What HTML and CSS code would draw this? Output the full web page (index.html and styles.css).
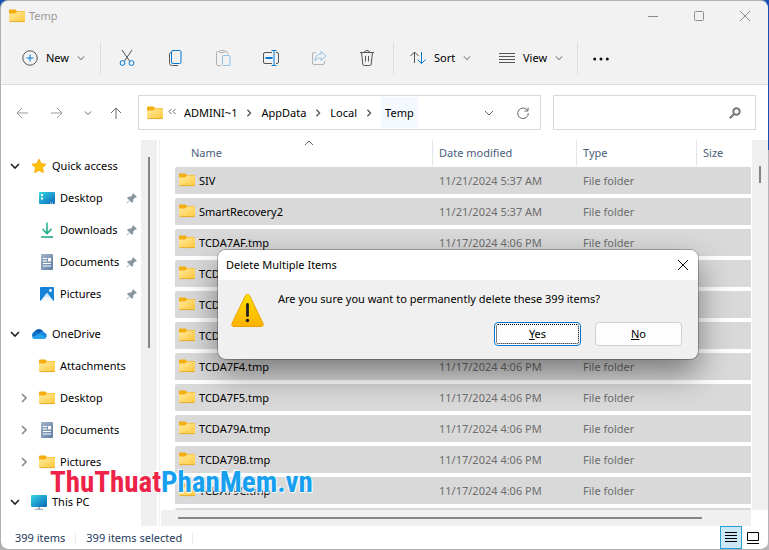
FILE: index.html
```
<!DOCTYPE html>
<html lang="en">

<head>
    <meta charset="UTF-8">
    <meta name="viewport" content="width=device-width, initial-scale=1.0">
    <title>Temp</title>
    <link rel="stylesheet" href="styles.css">
</head>

<body>
    <!-- Shared icons -->
    <svg class="sprite" aria-hidden="true">
        <defs>
            <linearGradient id="gFolder" x1="0" y1="0" x2="1" y2="1">
                <stop offset="0" stop-color="#ffe9a0" />
                <stop offset="1" stop-color="#ffca3c" />
            </linearGradient>
            <linearGradient id="gScreen" x1="0" y1="0" x2="1" y2="1">
                <stop offset="0" stop-color="#35d6e4" />
                <stop offset="1" stop-color="#0b66b8" />
            </linearGradient>
            <linearGradient id="gDown" gradientUnits="userSpaceOnUse" x1="0" y1="0" x2="16" y2="16">
                <stop offset="0" stop-color="#2fd09a" />
                <stop offset="1" stop-color="#0f9183" />
            </linearGradient>
            <linearGradient id="gDoc" x1="0" y1="0" x2="1" y2="1">
                <stop offset="0" stop-color="#a3b6cc" />
                <stop offset="1" stop-color="#5f7da1" />
            </linearGradient>
            <linearGradient id="gWarn" x1="0" y1="0" x2="0" y2="1">
                <stop offset="0" stop-color="#ffe000" />
                <stop offset="1" stop-color="#ffb100" />
            </linearGradient>
        </defs>
        <symbol id="folder" viewBox="0 0 16 16">
            <path d="M0 2.500a1 1 0 0 1 1-1h5.500l1.500 1.500h7a1 1 0 0 1 1 1V6H0z" fill="#f4ae0d" />
            <path d="M0 5.500h6l2-2h7a1 1 0 0 1 1 1V13a1 1 0 0 1-1 1H1a1 1 0 0 1-1-1z" fill="url(#gFolder)" />
            <path d="M.5 13.600h15" stroke="#e0a022" stroke-width=".8" />
        </symbol>
        <symbol id="desktop" viewBox="0 0 16 16">
            <rect y="2" width="16" height="12" rx="1" fill="url(#gScreen)" />
            <path d="M2 4h2v2H2zM2 7.500h2v2H2z" fill="#fff" />
            <path d="M11 13h1M13 13h1" stroke="#fff" />
        </symbol>
        <symbol id="download" viewBox="0 0 16 16">
            <path d="M8 .5V11M3.500 7L8 11.500 12.500 7M2 15h12" fill="none" stroke="url(#gDown)" stroke-width="1.600" />
        </symbol>
        <symbol id="document" viewBox="0 0 16 16">
            <rect x="2" width="12" height="16" rx="1" fill="url(#gDoc)" />
            <path d="M4 4.500h4M4 7h4M4 9.500h8M4 12h8" stroke="#fff" stroke-width="1.200" />
            <path d="M9 4h3v3.500H9z" fill="#fff" />
        </symbol>
        <symbol id="picture" viewBox="0 0 16 16">
            <rect x="1" y="1" width="14" height="14" rx="1" fill="#1583d8" />
            <path d="M1.500 15l6.500-8 6.500 8z" fill="#f5faff" />
            <path d="M5 10.500L8 7l3 3.500-1.500 1L8 10.500l-1.500 1z" fill="#d3e8f8" />
            <circle cx="11.500" cy="4.500" r="1.400" fill="#fff" />
        </symbol>
        <symbol id="star" viewBox="0 0 16 16">
            <path d="M8 1.200l2.100 4.500 4.900.6-3.600 3.400.9 4.900L8 12.200l-4.300 2.400.9-4.900L1 6.300l4.900-.6z" fill="#ffc20e" stroke="#f9a800" stroke-linejoin="round" />
        </symbol>
        <symbol id="cloud" viewBox="0 0 16 16">
            <path d="M4 12.500a4 4 0 0 1-.5-7A5 5 0 0 1 12.500 6L9 10z" fill="#0a5cb5" />
            <path d="M4 12.800a3.700 3.700 0 0 1-1.500-6.600c2-.8 4-.2 5.500 1L12 9z" fill="#1171cc" />
            <path d="M8 7.500C9 5.800 11 5.200 13 6.200a3.400 3.400 0 0 1 1 6.300z" fill="#1c8ae0" />
            <path d="M4 13c-1.500 0-2.500-.6-3-1.500L8 7.800l7 3.700c-.5 1-1.400 1.500-2.500 1.500z" fill="#28a4ec" />
        </symbol>
        <symbol id="computer" viewBox="0 0 16 16">
            <rect y="1" width="16" height="12" rx="1" fill="url(#gScreen)" />
            <path d="M7 13h2v2H7z" fill="#a8b2ba" />
            <path d="M4 15.300h8" stroke="#8e9aa4" />
        </symbol>
        <symbol id="pin" viewBox="0 0 12 12">
            <path d="M7 1l4 4-1.200.6-1 .2-1.600 1.800v2L6 11 3.800 8.600 1 11.400l-.4-.4 2.800-2.800L1 6l1.400-1.200h2L6.200 3.200l.2-1z" fill="#8795a0" />
        </symbol>
        <symbol id="chevDown" viewBox="0 0 10 10">
            <path d="M1 3l4 4 4-4" fill="none" stroke="currentColor" stroke-width="1.600" />
        </symbol>
        <symbol id="chevRight" viewBox="0 0 10 10">
            <path d="M3 1l4 4-4 4" fill="none" stroke="currentColor" stroke-width="1.600" />
        </symbol>
    </svg>

    <div class="window">
        <header class="titlebar">
            <svg class="icon"><use href="#folder" /></svg>
            <h1>Temp</h1>
            <button class="caption" aria-label="Minimize"><svg width="10" height="10"><path d="M0 5.500h10" /></svg></button>
            <button class="caption" aria-label="Maximize"><svg width="10" height="10"><rect x=".5" y=".5" width="9" height="9" rx="1" /></svg></button>
            <button class="caption" aria-label="Close"><svg width="10" height="10"><path d="M0 0l10 10M10 0L0 10" /></svg></button>
        </header>

        <div class="toolbar">
            <button class="command new">
                <svg width="16" height="16" viewBox="0 0 16 16"><circle cx="8" cy="8" r="7.200" /><path class="blue" d="M8 4.500v7M4.500 8h7" /></svg>
                New
                <svg class="chev"><use href="#chevDown" /></svg>
            </button>
            <span class="divider"></span>
            <button class="tool" aria-label="Cut">
                <svg width="16" height="16" viewBox="0 0 16 16"><path d="M3 0l7.500 11M13 0L5.500 11" /><circle class="blue" cx="3.500" cy="13" r="2.400" /><circle class="blue" cx="12.500" cy="13" r="2.400" /></svg>
            </button>
            <button class="tool" aria-label="Copy">
                <svg width="16" height="16" viewBox="0 0 16 16"><path d="M4 2.500C2.500 3 2.500 3.500 2.500 5v7.500c0 2 1 3 3 3H11" /><rect class="blue" x="4.500" y=".5" width="9.500" height="13" rx="1.500" /></svg>
            </button>
            <button class="tool faded" aria-label="Paste">
                <svg width="16" height="16" viewBox="0 0 16 16"><path d="M6 15.500H2.500a1 1 0 0 1-1-1v-12a1 1 0 0 1 1-1H5M10 1.500h1.500a1 1 0 0 1 1 1V4" /><rect x="4.500" y=".5" width="6" height="2" rx="1" /><rect class="blue" x="7.500" y="5.500" width="7.500" height="10" rx="1" /></svg>
            </button>
            <button class="tool" aria-label="Rename">
                <svg width="16" height="16" viewBox="0 0 16 16"><path d="M9 2.500H2a1.500 1.500 0 0 0-1.500 1.500v8A1.500 1.500 0 0 0 2 13.500h7M13 2.500h1a1.500 1.500 0 0 1 1.500 1.500v8a1.500 1.500 0 0 1-1.500 1.500h-1" /><path class="blue" d="M8.500.5h5M8.500 15.500h5M11 .5v15" /><path class="blue thick" d="M2.500 8h7" /></svg>
            </button>
            <button class="tool faded" aria-label="Share">
                <svg width="16" height="16" viewBox="0 0 16 16"><path d="M5 2.500H3A1.500 1.500 0 0 0 1.500 4v9A1.500 1.500 0 0 0 3 14.500h9a1.500 1.500 0 0 0 1.500-1.500v-2" /><path class="blue" d="M10 1.500l5 4.500-5 4.500V8c-3-.2-4.500.8-6 3 0-4 2-7 6-7z" /></svg>
            </button>
            <button class="tool" aria-label="Delete">
                <svg width="16" height="16" viewBox="0 0 16 16"><path d="M1 2.500h14M5.500 2.500a2.500 2 0 0 1 5 0M2.500 2.500l1.300 11.500a1.500 1.500 0 0 0 1.500 1.500h5.400a1.500 1.500 0 0 0 1.500-1.500l1.300-11.500M6.500 6v5.500M9.500 6v5.500" /></svg>
            </button>
            <span class="divider"></span>
            <button class="command sort">
                <svg width="16" height="16" viewBox="0 0 16 16"><path d="M4.500 13V2M.5 6l4-4 4 4" /><path class="blue" d="M11.500 2v11.500M7.500 9.500l4 4 4-4" /></svg>
                Sort
                <svg class="chev"><use href="#chevDown" /></svg>
            </button>
            <button class="command view">
                <svg width="16" height="16" viewBox="0 0 16 16"><path d="M0 3.500h16M0 6.500h16M0 9.500h16M0 12.500h16" /></svg>
                View
                <svg class="chev"><use href="#chevDown" /></svg>
            </button>
            <span class="divider"></span>
            <button class="tool more" aria-label="See more">
                <svg width="16" height="16" viewBox="0 0 16 16"><g class="dots"><circle cx="1.700" cy="9" r="1.500" /><circle cx="8" cy="9" r="1.500" /><circle cx="14.300" cy="9" r="1.500" /></g></svg>
            </button>
        </div>

        <nav class="address-row">
            <button class="nav-btn off" aria-label="Back"><svg width="12" height="12"><path d="M6 1L1 6l5 5M1 6h11" /></svg></button>
            <button class="nav-btn off" aria-label="Forward"><svg width="12" height="12"><path d="M6 1l5 5-5 5M11 6H0" /></svg></button>
            <button class="nav-btn recent" aria-label="Recent locations"><svg width="8" height="8"><path d="M1 2.500l3 3 3-3" /></svg></button>
            <button class="nav-btn up" aria-label="Up"><svg width="12" height="12"><path d="M1 6l5-5 5 5M6 1v11" /></svg></button>
            <div class="address">
                <svg class="icon"><use href="#folder" /></svg>
                <svg class="back" width="8" height="8"><path d="M3.500 1L1 3.500 3.500 6M7.500 1L5 3.500 7.500 6" /></svg>
                <a href="#">ADMINI~1</a>
                <svg class="sep"><use href="#chevRight" /></svg>
                <a href="#">AppData</a>
                <svg class="sep"><use href="#chevRight" /></svg>
                <a href="#">Local</a>
                <svg class="sep"><use href="#chevRight" /></svg>
                <a href="#" class="current">Temp</a>
                <button class="history" aria-label="Previous locations"><svg width="10" height="10"><path d="M1 3l4 4 4-4" /></svg></button>
                <button aria-label="Refresh"><svg width="12" height="12"><path d="M10.500 3.500A5.300 5.300 0 1 0 11.300 6M11 .5v3.500H7.500" /></svg></button>
            </div>
            <label class="search">
                <input type="text" aria-label="Search Temp">
                <svg width="12" height="12"><circle cx="7.500" cy="4.500" r="3.200" /><path d="M5 7L.8 11.200" /></svg>
            </label>
        </nav>

        <main>
            <aside class="sidebar">
                <ul class="tree">
                    <li class="root"><svg class="chev"><use href="#chevDown" /></svg><svg class="icon"><use href="#star" /></svg><a href="#">Quick access</a></li>
                    <li><svg class="icon"><use href="#desktop" /></svg><a href="#">Desktop</a><svg class="pin"><use href="#pin" /></svg></li>
                    <li><svg class="icon"><use href="#download" /></svg><a href="#">Downloads</a><svg class="pin"><use href="#pin" /></svg></li>
                    <li><svg class="icon"><use href="#document" /></svg><a href="#">Documents</a><svg class="pin"><use href="#pin" /></svg></li>
                    <li><svg class="icon"><use href="#picture" /></svg><a href="#">Pictures</a><svg class="pin"><use href="#pin" /></svg></li>
                </ul>
                <ul class="tree">
                    <li class="root"><svg class="chev"><use href="#chevDown" /></svg><svg class="icon"><use href="#cloud" /></svg><a href="#">OneDrive</a></li>
                    <li><svg class="icon"><use href="#folder" /></svg><a href="#">Attachments</a></li>
                    <li class="closed"><svg class="chev"><use href="#chevRight" /></svg><svg class="icon"><use href="#folder" /></svg><a href="#">Desktop</a></li>
                    <li class="closed"><svg class="chev"><use href="#chevRight" /></svg><svg class="icon"><use href="#document" /></svg><a href="#">Documents</a></li>
                    <li class="closed"><svg class="chev"><use href="#chevRight" /></svg><svg class="icon"><use href="#folder" /></svg><a href="#">Pictures</a></li>
                </ul>
                <ul class="tree">
                    <li class="root"><svg class="chev"><use href="#chevDown" /></svg><svg class="icon"><use href="#computer" /></svg><a href="#">This PC</a></li>
                </ul>
            </aside>
            <div class="scroll side-scroll"><span></span></div>

            <section class="files">
                <div class="list">
                    <table>
                        <thead>
                            <tr>
                                <th class="name">Name<svg class="sorted" width="10" height="6"><path d="M1 5l4-4 4 4" /></svg></th>
                                <th class="date">Date modified</th>
                                <th class="type">Type</th>
                                <th class="size">Size</th>
                            </tr>
                        </thead>
                        <tbody>
                            <tr><td><svg class="icon"><use href="#folder" /></svg>SIV</td><td>11/21/2024 5:37 AM</td><td>File folder</td><td></td></tr>
                            <tr><td><svg class="icon"><use href="#folder" /></svg>SmartRecovery2</td><td>11/21/2024 5:37 AM</td><td>File folder</td><td></td></tr>
                            <tr><td><svg class="icon"><use href="#folder" /></svg>TCDA7AF.tmp</td><td>11/17/2024 4:06 PM</td><td>File folder</td><td></td></tr>
                            <tr><td><svg class="icon"><use href="#folder" /></svg>TCDA7B0.tmp</td><td>11/17/2024 4:06 PM</td><td>File folder</td><td></td></tr>
                            <tr><td><svg class="icon"><use href="#folder" /></svg>TCDA7C1.tmp</td><td>11/17/2024 4:06 PM</td><td>File folder</td><td></td></tr>
                            <tr><td><svg class="icon"><use href="#folder" /></svg>TCDA7E3.tmp</td><td>11/17/2024 4:06 PM</td><td>File folder</td><td></td></tr>
                            <tr><td><svg class="icon"><use href="#folder" /></svg>TCDA7F4.tmp</td><td>11/17/2024 4:06 PM</td><td>File folder</td><td></td></tr>
                            <tr><td><svg class="icon"><use href="#folder" /></svg>TCDA7F5.tmp</td><td>11/17/2024 4:06 PM</td><td>File folder</td><td></td></tr>
                            <tr><td><svg class="icon"><use href="#folder" /></svg>TCDA79A.tmp</td><td>11/17/2024 4:06 PM</td><td>File folder</td><td></td></tr>
                            <tr><td><svg class="icon"><use href="#folder" /></svg>TCDA79B.tmp</td><td>11/17/2024 4:06 PM</td><td>File folder</td><td></td></tr>
                            <tr><td><svg class="icon"><use href="#folder" /></svg>TCDA79C.tmp</td><td>11/17/2024 4:06 PM</td><td>File folder</td><td></td></tr>
                            <tr><td></td><td></td><td></td><td></td></tr>
                        </tbody>
                    </table>
                </div>
                <div class="scroll list-scroll"><span></span></div>
                <div class="bottom-scroll"><span></span></div>
            </section>
        </main>

        <footer class="status">
            <span>399 items</span>
            <span>399 items selected</span>
            <button class="layout active" aria-label="Details view"><svg width="12" height="11"><path d="M0 .5h12M0 3.500h12M0 6.500h12M0 9.500h12" /></svg></button>
            <button class="layout" aria-label="Large icons view"><svg width="12" height="12"><path d="M.5.5h11v8H.5zM0 11.500h12" /></svg></button>
        </footer>
    </div>

    <div class="dialog" role="dialog" aria-labelledby="dialogTitle">
        <div class="dialog-title">
            <h2 id="dialogTitle">Delete Multiple Items</h2>
            <button aria-label="Close"><svg width="10" height="10"><path d="M0 0l10 10M10 0L0 10" /></svg></button>
        </div>
        <div class="dialog-body">
            <svg class="warning" viewBox="0 0 33 33">
                <path d="M14.500 1.500a2.200 2.200 0 0 1 4 0L32 29.500a2 2 0 0 1-1.800 3H2.800a2 2 0 0 1-1.800-3z" fill="url(#gWarn)" stroke="#e8a200" />
                <path d="M16.500 10.500v11" stroke="#222" stroke-width="2.800" stroke-linecap="round" />
                <circle cx="16.500" cy="26.500" r="1.800" fill="#222" />
            </svg>
            <p>Are you sure you want to permanently delete these 399 items?</p>
        </div>
        <div class="dialog-buttons">
            <button class="yes"><u>Y</u>es</button>
            <button><u>N</u>o</button>
        </div>
    </div>

    <div class="watermark"><span>ThuThuat</span>PhanMem.vn</div>
</body>

</html>
```
FILE: styles.css
```
* {
    box-sizing: border-box;
}

body {
    font-family: "Noto Sans", "Open Sans", sans-serif;
    font-size: 11px;
    line-height: 16px;
    margin: 0;
    height: 100vh;
    overflow: hidden;
    color: #000;
    background: linear-gradient(to bottom, #1550b5 150px, #b4b4b8 150px);
}

button {
    font: inherit;
    color: inherit;
    background: none;
    border: none;
    padding: 0;
    display: flex;
    align-items: center;
    justify-content: center;
}

a {
    color: inherit;
    text-decoration: none;
}

svg {
    display: block;
    flex: none;
    fill: none;
    stroke: none;
}

.sprite {
    position: absolute;
    width: 0;
    height: 0;
}

.icon {
    width: 16px;
    height: 16px;
}

.window {
    height: 100%;
    display: flex;
    flex-direction: column;
    background: #fff;
    background-clip: padding-box;
    border: 1px solid #b0b0b0;
    border-right-color: transparent;
    border-radius: 8px;
    overflow: hidden;
}

/* Title bar */
.titlebar {
    display: flex;
    align-items: center;
    flex: none;
    height: 30px;
    padding-left: 8px;
    background: #f2f2f2;
}

.titlebar h1 {
    flex: 1;
    margin: 0 0 0 4px;
    font-size: 11px;
    font-weight: normal;
    color: #999;
}

.caption {
    width: 46px;
    height: 30px;
}

.caption svg {
    stroke: #8c8c8c;
}

/* Command bar */
.toolbar {
    display: flex;
    align-items: center;
    flex: none;
    height: 54px;
    padding-left: 12px;
    background: #f2f2f2;
    border-bottom: 1px solid #dcdcdc;
}

.toolbar svg {
    stroke: #555;
}

.toolbar .blue {
    stroke: #0078d4;
}

.toolbar .thick {
    stroke-width: 2;
}

.toolbar .dots {
    fill: #111;
    stroke: none;
}

.toolbar .faded {
    opacity: 0.4;
}

.divider {
    width: 1px;
    height: 32px;
    margin: 0 2px;
    background: #dedede;
}

.tool {
    width: 48px;
    height: 40px;
}

.tool.more {
    width: 42px;
}

.command {
    justify-content: flex-start;
    gap: 8px;
    height: 40px;
    padding-left: 9px;
    width: 85px;
}

.command.sort {
    width: 94px;
    padding-left: 14px;
}

.toolbar .chev {
    width: 8px;
    height: 8px;
    color: #999;
    stroke: none;
}

/* Navigation and address */
.address-row {
    display: flex;
    align-items: center;
    flex: none;
    height: 55px;
    padding: 0 12px 0 3px;
}

.nav-btn {
    width: 35px;
    height: 30px;
}

.nav-btn svg,
.address svg.back,
.address button svg,
.sorted {
    stroke: #666;
}

.nav-btn.off svg {
    stroke: #999;
}

.nav-btn.recent {
    width: 27px;
}

.nav-btn.up {
    width: 30px;
    margin-right: 7px;
}

.address {
    display: flex;
    align-items: center;
    flex: 2;
    height: 35px;
    border: 1px solid #d9d9d9;
}

.address .icon {
    margin-left: 8px;
}

.address .back {
    margin: 0 8px 2px 5px;
    stroke: #333;
}

.address .sep {
    width: 8px;
    height: 8px;
    margin: 0 8px;
    color: #555;
}

.address .current {
    line-height: 31px;
    padding: 0 4px;
    background: #f3f9fe;
}

.address button {
    width: 34px;
    height: 32px;
}

.address .history {
    margin-left: auto;
}

.search {
    display: flex;
    align-items: center;
    flex: 1;
    height: 35px;
    margin-left: 12px;
    border: 1px solid #d9d9d9;
}

.search input {
    flex: 1;
    min-width: 0;
    border: none;
    outline: none;
    font: inherit;
}

.search svg {
    margin-right: 14px;
    stroke: #777;
    stroke-width: 2;
}

/* Folder tree */
main {
    display: flex;
    flex: 1;
    min-height: 0;
}

.sidebar {
    width: 140px;
    padding-top: 10px;
    overflow: hidden;
}

.tree {
    list-style: none;
    margin: 0 0 8px;
    padding: 0;
}

.tree li {
    display: flex;
    align-items: center;
    height: 32px;
    padding-left: 38px;
    padding-right: 3px;
}

.tree li.root {
    padding-left: 9px;
}

.tree li.closed {
    padding-left: 18px;
}

.tree a {
    flex: 1;
    margin-left: 5px;
    white-space: nowrap;
}

.tree .chev {
    width: 10px;
    height: 10px;
    margin-right: 11px;
    color: #222;
}

.tree .closed .chev {
    margin-right: 10px;
    color: #888;
}

.tree .pin {
    width: 12px;
    height: 12px;
}

.scroll {
    display: flex;
    flex: none;
    width: 16px;
    justify-content: center;
    background: #f0f0f0;
}

.scroll span {
    width: 2px;
    background: #858585;
}

.side-scroll span {
    height: 191px;
    margin-top: 17px;
}

/* File list */
.files {
    display: grid;
    flex: 1;
    grid-template-columns: 1fr 16px;
    grid-template-rows: 1fr 16px;
    min-width: 0;
    margin-left: 2px;
    border-left: 1px solid #f0f0f0;
}

.list {
    overflow: hidden;
    min-height: 0;
    padding: 0 1px 0 15px;
}

table {
    width: 100%;
    table-layout: fixed;
    border-spacing: 0;
}

th {
    position: relative;
    height: 27px;
    padding: 0 0 0 6px;
    font-weight: normal;
    text-align: left;
    color: #4c607a;
    border-left: 1px solid #e5e5e5;
    border-bottom: 2px solid #fff;
}

th.name {
    padding-left: 16px;
    border-left: none;
}

th.date {
    width: 144px;
}

th.type {
    width: 120px;
}

th.size {
    width: 55px;
}

.sorted {
    position: absolute;
    left: 50%;
    top: 0;
}

td {
    height: 31px;
    padding: 0 0 0 7px;
    color: #6d6d6d;
    background: #d9d9d9;
    border-bottom: 4px solid #fff;
    white-space: nowrap;
}

td:first-child {
    padding-left: 4px;
    color: #000;
    border-radius: 2px 0 0 2px;
}

td .icon {
    display: inline-block;
    margin-right: 4px;
    vertical-align: -3px;
}

.list-scroll span {
    height: 17px;
    margin-top: 26px;
}

.bottom-scroll {
    display: flex;
    align-items: center;
    padding: 0 49px 0 17px;
    margin: 0 1px;
    background: #f0f0f0;
}

.bottom-scroll span {
    flex: 1;
    height: 2px;
    background: #858585;
}

/* Status bar */
.status {
    display: flex;
    align-items: center;
    flex: none;
    height: 23px;
    padding: 0 4px 0 14px;
    color: #1e395b;
}

.status span {
    padding-right: 10px;
    margin-right: 10px;
    line-height: 12px;
    border-right: 1px solid #ececec;
}

.layout {
    width: 22px;
    height: 23px;
}

.layout svg {
    stroke: #000;
}

.layout.active {
    margin-left: auto;
    background: #cce8f6;
    border: 1px solid #26a0da;
}

/* Delete confirmation */
.dialog {
    position: absolute;
    left: 218px;
    top: 250px;
    width: 480px;
    background: #f0f0f0;
    border-radius: 8px;
    overflow: hidden;
    box-shadow: 0 0 0 1px rgba(0, 0, 0, 0.25), 0 14px 32px rgba(0, 0, 0, 0.45);
}

.dialog-title {
    display: flex;
    align-items: center;
    justify-content: space-between;
    height: 30px;
    padding: 0 10px 0 8px;
    background: #fff;
}

.dialog-title h2 {
    margin: 0;
    font-size: 11px;
    font-weight: normal;
}

.dialog-title svg {
    stroke: #111;
}

.dialog-body {
    display: flex;
    gap: 14px;
    padding: 14px 13px 0;
}

.dialog-body p {
    margin: -3px 0 0;
}

.warning {
    width: 33px;
    height: 33px;
}

.dialog-buttons {
    display: flex;
    justify-content: flex-end;
    gap: 14px;
    padding: 0 16px 13px;
    margin-top: -5px;
}

.dialog-buttons button {
    display: block;
    width: 87px;
    height: 24px;
    line-height: 20px;
    background: #fdfdfd;
    border: 1px solid #d0d0d0;
    border-radius: 4px;
}

.dialog-buttons .yes {
    border-color: #0078d4;
    outline: 1px dotted #000;
    outline-offset: -3px;
}

/* Site mark */
.watermark {
    position: absolute;
    left: 50px;
    top: 464px;
    font-family: "Roboto Condensed", "Liberation Sans Narrow", sans-serif;
    font-size: 29px;
    line-height: 36px;
    font-weight: bold;
    color: #18a0f0;
    text-shadow: 0 0 2px #fff, 1px 1px 1px #fff, -1px -1px 1px #fff;
}

.watermark span {
    color: #ee2348;
}
```
